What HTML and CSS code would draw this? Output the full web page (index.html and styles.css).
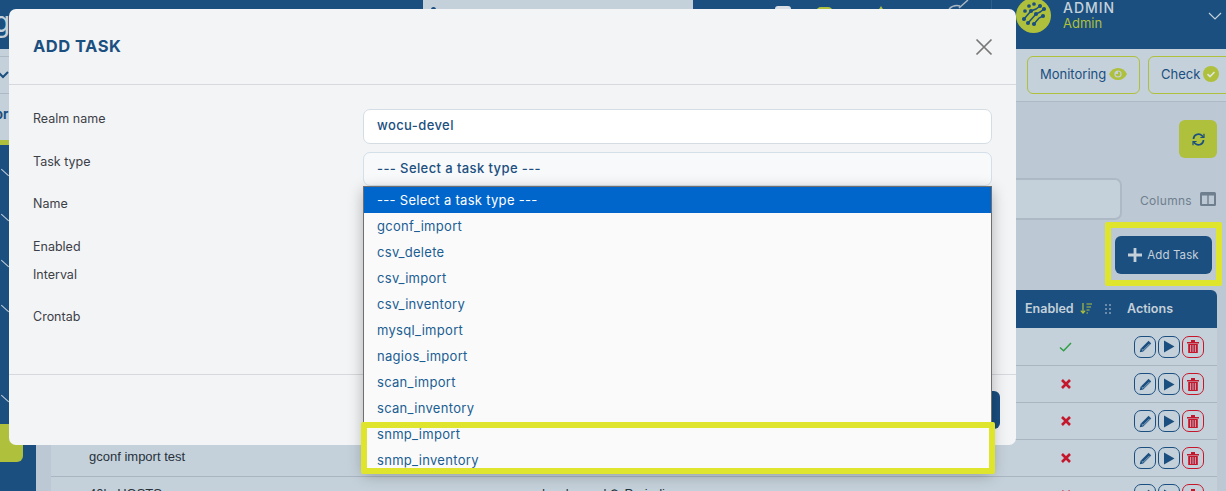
FILE: index.html
```html
<!DOCTYPE html>
<html lang="en">
<head>
  <meta charset="UTF-8" />
  <title>Add Task</title>
  <link rel="stylesheet" href="styles.css">
</head>
<body>

  <header class="topbar">
    <span class="brand">g</span>
    <div class="search"><span class="search-dot"></span></div>
    <div class="top-icons">
      <span class="ti ti-white"></span>
      <span class="ti ti-green"></span>
      <span class="ti ti-star"></span>
      <svg class="ti-check" width="26" height="10" viewBox="0 0 26 10"><path d="M3 9c3-3 7-4 11-3M13 8l9-8" fill="none" stroke="#aab8c4" stroke-width="1.5"/></svg>
    </div>
    <div class="user">
      <svg class="avatar" width="35" height="35" viewBox="0 0 35 35">
        <circle cx="17.5" cy="17.5" r="17.5" fill="#aec03c"/>
        <g stroke="#1b4f80" stroke-width="1.5" fill="#1b4f80">
          <path d="M8 21l7-8 5-2 4-3M12 25l8-9 4-2 4-3M18 26l5-6 4-2" fill="none"/>
          <circle cx="8" cy="21" r="1.3"/><circle cx="15" cy="13" r="1.3"/><circle cx="24" cy="8" r="1.3"/>
          <circle cx="12" cy="25" r="1.3"/><circle cx="20" cy="16" r="1.3"/><circle cx="28" cy="11" r="1.3"/>
          <circle cx="18" cy="26" r="1.3"/><circle cx="27" cy="18" r="1.3"/>
          <circle cx="9" cy="13" r="1.100"/><circle cx="13" cy="8" r="1.100"/><circle cx="18" cy="6" r="1.100"/>
        </g>
      </svg>
      <div class="user-text">
        <div class="user-name">ADMIN</div>
        <div class="user-role">Admin</div>
      </div>
      <svg class="user-chevron" width="14" height="8" viewBox="0 0 14 8"><path d="M1 1l6 6 6-6" fill="none" stroke="#c5d1da" stroke-width="1.2"/></svg>
    </div>
  </header>

  <div class="layout">
    <aside class="sidebar">
      <div class="side-head">
        <div class="side-row"><svg width="12" height="8" viewBox="0 0 12 8"><path d="M-2 1l5 5 5-5" fill="none" stroke="#1b4f80" stroke-width="2"/></svg></div>
        <div class="side-label">or</div>
      </div>
      <div class="side-items">
        <div class="side-item"><i></i></div>
        <div class="side-item"><i></i></div>
        <div class="side-item"><i></i></div>
        <div class="side-item"><i></i></div>
        <div class="side-item side-empty"></div>
        <div class="side-item"><i></i></div>
      </div>
      <div class="side-green"></div>
    </aside>

    <main class="content">
      <div class="subbar">
        <button class="pill">Monitoring
          <svg width="18" height="12" viewBox="0 0 18 12"><path d="M0 6c2-4 5-6 9-6s7 2 9 6c-2 4-5 6-9 6S2 10 0 6z" fill="#aec03c"/><circle cx="9" cy="6" r="3.6" fill="#c5d1da"/><path d="M9 3.6A2.4 2.4 0 1 1 6.6 6H9z" fill="#aec03c"/></svg>
        </button>
        <button class="pill pill-check">Check
          <svg width="16" height="16" viewBox="0 0 16 16"><circle cx="8" cy="8" r="8" fill="#aec03c"/><path d="M4.5 8.2l2.500 2.400 4.500-4.600" fill="none" stroke="#dfe6e0" stroke-width="1.6"/></svg>
        </button>
      </div>

      <div class="tools">
        <button class="refresh">
          <svg width="13" height="13" viewBox="0 0 13 13" fill="none" stroke="#1b4f80" stroke-width="1.7"><path d="M1.5 6A5 5 0 0 1 10 2.6L11.5 4M11.500 7A5 5 0 0 1 3 10.400L1.500 9"/><path d="M12 .8v3.700H8.400M1 12.200V8.500h3.600" stroke-width="1.200"/></svg>
        </button>
      </div>

      <div class="filter-row">
        <div class="filter"></div>
        <span class="columns">Columns</span>
        <svg width="16" height="14" viewBox="0 0 16 14"><rect width="16" height="14" rx="1.500" fill="#6f7f8e"/><rect x="2" y="3.500" width="5.300" height="8.500" fill="#bcc8d3"/><rect x="8.700" y="3.500" width="5.300" height="8.500" fill="#bcc8d3"/></svg>
      </div>

      <div class="add-row">
        <div class="add-frame">
          <button class="add-btn">
            <svg width="14" height="14" viewBox="0 0 14 14"><path d="M7 0v14M0 7h14" stroke="#c5d1da" stroke-width="2.800"/></svg>
            Add Task
          </button>
        </div>
      </div>

      <div class="table">
        <div class="t-head">
          <span></span>
          <span></span>
          <span class="t-enabled">Enabled
            <svg width="12" height="11" viewBox="0 0 12 11" fill="none" stroke="#aec03c" stroke-width="1.200"><path d="M3 0v10M.8 7.600L3 10l2.200-2.400M6.500 1H12M6.500 4h4.500M6.500 7h3M6.500 10H8"/></svg>
            <svg class="grip" width="6" height="10" viewBox="0 0 6 10" fill="#6d8cab"><rect width="2" height="2"/><rect x="4" width="2" height="2"/><rect y="4" width="2" height="2"/><rect x="4" y="4" width="2" height="2"/><rect y="8" width="2" height="2"/><rect x="4" y="8" width="2" height="2"/></svg>
          </span>
          <span>Actions</span>
        </div>

        <div class="t-row t-first">
          <span class="t-name"></span>
          <span></span>
          <span class="t-state"><svg width="13" height="10" viewBox="0 0 13 10"><path d="M1 5.500l3.600 3.200L12 1" fill="none" stroke="#2f9e44" stroke-width="1.500"/></svg></span>
          <span class="t-actions">
            <button class="act"><svg width="13" height="13" viewBox="0 0 13 13"><path d="M9.600.8l2.600 2.600-8 8L.8 12.200l.8-3.400z" fill="#1b4f80"/><path d="M2.600 9l1.400 1.400 6.600-6.600" fill="none" stroke="#c5d1da" stroke-width=".7"/></svg></button>
            <button class="act"><svg width="12" height="13" viewBox="0 0 12 13"><path d="M1 .5l10.500 6L1 12.500z" fill="#1b4f80"/></svg></button>
            <button class="act act-del"><svg width="12" height="13" viewBox="0 0 12 13"><path d="M0 2h12v1.400H0zM4 0h4v2H4zM1.200 4h9.600v9H1.200z" fill="#c4172c"/><path d="M3.600 5v7M6 5v7M8.400 5v7" stroke="#c5d1da" stroke-width=".8"/></svg></button>
          </span>
        </div>

        <div class="t-row">
          <span class="t-name"></span>
          <span></span>
          <span class="t-state"><svg class="no" width="10" height="10" viewBox="0 0 10 10"><path d="M1 1l8 8M9 1l-8 8" stroke="#c4172c" stroke-width="2.600"/></svg></span>
          <span class="t-actions">
            <button class="act"><svg width="13" height="13" viewBox="0 0 13 13"><path d="M9.600.8l2.600 2.600-8 8L.8 12.200l.8-3.400z" fill="#1b4f80"/><path d="M2.600 9l1.400 1.400 6.600-6.600" fill="none" stroke="#c5d1da" stroke-width=".7"/></svg></button>
            <button class="act"><svg width="12" height="13" viewBox="0 0 12 13"><path d="M1 .5l10.500 6L1 12.500z" fill="#1b4f80"/></svg></button>
            <button class="act act-del"><svg width="12" height="13" viewBox="0 0 12 13"><path d="M0 2h12v1.400H0zM4 0h4v2H4zM1.200 4h9.600v9H1.200z" fill="#c4172c"/><path d="M3.600 5v7M6 5v7M8.400 5v7" stroke="#c5d1da" stroke-width=".8"/></svg></button>
          </span>
        </div>

        <div class="t-row">
          <span class="t-name"></span>
          <span></span>
          <span class="t-state"><svg class="no" width="10" height="10" viewBox="0 0 10 10"><path d="M1 1l8 8M9 1l-8 8" stroke="#c4172c" stroke-width="2.600"/></svg></span>
          <span class="t-actions">
            <button class="act"><svg width="13" height="13" viewBox="0 0 13 13"><path d="M9.600.8l2.600 2.600-8 8L.8 12.200l.8-3.400z" fill="#1b4f80"/><path d="M2.600 9l1.400 1.400 6.600-6.600" fill="none" stroke="#c5d1da" stroke-width=".7"/></svg></button>
            <button class="act"><svg width="12" height="13" viewBox="0 0 12 13"><path d="M1 .5l10.500 6L1 12.500z" fill="#1b4f80"/></svg></button>
            <button class="act act-del"><svg width="12" height="13" viewBox="0 0 12 13"><path d="M0 2h12v1.400H0zM4 0h4v2H4zM1.200 4h9.600v9H1.200z" fill="#c4172c"/><path d="M3.600 5v7M6 5v7M8.400 5v7" stroke="#c5d1da" stroke-width=".8"/></svg></button>
          </span>
        </div>

        <div class="t-row">
          <span class="t-name">gconf import test</span>
          <span></span>
          <span class="t-state"><svg class="no" width="10" height="10" viewBox="0 0 10 10"><path d="M1 1l8 8M9 1l-8 8" stroke="#c4172c" stroke-width="2.600"/></svg></span>
          <span class="t-actions">
            <button class="act"><svg width="13" height="13" viewBox="0 0 13 13"><path d="M9.600.8l2.600 2.600-8 8L.8 12.200l.8-3.400z" fill="#1b4f80"/><path d="M2.600 9l1.400 1.400 6.600-6.600" fill="none" stroke="#c5d1da" stroke-width=".7"/></svg></button>
            <button class="act"><svg width="12" height="13" viewBox="0 0 12 13"><path d="M1 .5l10.500 6L1 12.500z" fill="#1b4f80"/></svg></button>
            <button class="act act-del"><svg width="12" height="13" viewBox="0 0 12 13"><path d="M0 2h12v1.400H0zM4 0h4v2H4zM1.200 4h9.600v9H1.200z" fill="#c4172c"/><path d="M3.600 5v7M6 5v7M8.400 5v7" stroke="#c5d1da" stroke-width=".8"/></svg></button>
          </span>
        </div>

        <div class="t-row">
          <span class="t-name">40k_HOSTS</span>
          <span class="t-type">wocu-devel mysql ⟳ Periodic</span>
          <span class="t-state"><svg class="no" width="10" height="10" viewBox="0 0 10 10"><path d="M1 1l8 8M9 1l-8 8" stroke="#c4172c" stroke-width="2.600"/></svg></span>
          <span class="t-actions">
            <button class="act"><svg width="13" height="13" viewBox="0 0 13 13"><path d="M9.600.8l2.600 2.600-8 8L.8 12.200l.8-3.400z" fill="#1b4f80"/><path d="M2.600 9l1.400 1.400 6.600-6.600" fill="none" stroke="#c5d1da" stroke-width=".7"/></svg></button>
            <button class="act"><svg width="12" height="13" viewBox="0 0 12 13"><path d="M1 .5l10.500 6L1 12.500z" fill="#1b4f80"/></svg></button>
            <button class="act act-del"><svg width="12" height="13" viewBox="0 0 12 13"><path d="M0 2h12v1.400H0zM4 0h4v2H4zM1.200 4h9.600v9H1.200z" fill="#c4172c"/><path d="M3.600 5v7M6 5v7M8.400 5v7" stroke="#c5d1da" stroke-width=".8"/></svg></button>
          </span>
        </div>
      </div>
    </main>
  </div>

  <div class="modal">
    <div class="modal-head">
      <h2>ADD TASK</h2>
      <svg width="18" height="18" viewBox="0 0 18 18"><path d="M1.500 1.500l15 15M16.500 1.500l-15 15" stroke="#777" stroke-width="1.700" fill="none"/></svg>
    </div>
    <div class="modal-body">
      <div class="labels">
        <label class="l-realm">Realm name</label>
        <label class="l-type">Task type</label>
        <label class="l-name">Name</label>
        <label class="l-enabled">Enabled</label>
        <label class="l-interval">Interval</label>
        <label class="l-cron">Crontab</label>
      </div>
      <div class="fields">
        <div class="input">wocu-devel</div>
        <div class="input select">--- Select a task type ---</div>
      </div>
    </div>
    <div class="modal-foot">
      <button class="save">Save</button>
    </div>
  </div>

  <ul class="dropdown">
    <li class="selected">--- Select a task type ---</li>
    <li>gconf_import</li>
    <li>csv_delete</li>
    <li>csv_import</li>
    <li>csv_inventory</li>
    <li>mysql_import</li>
    <li>nagios_import</li>
    <li>scan_import</li>
    <li>scan_inventory</li>
    <li>snmp_import</li>
    <li>snmp_inventory</li>
  </ul>
  <div class="mark"></div>

</body>
</html>
```

FILE: styles.css
```css
* {
  margin: 0;
  padding: 0;
  box-sizing: border-box;
}

body {
  position: relative;
  width: 1226px;
  height: 491px;
  overflow: hidden;
  font-family: "Inter", "Liberation Sans", sans-serif;
  font-size: 13px;
  background: #bcc8d3;
  color: #1b4f80;
}

button {
  font-family: inherit;
  cursor: pointer;
}

/* top bar */
.topbar {
  display: flex;
  align-items: flex-start;
  height: 49px;
  background: #1b4f80;
}

.brand {
  width: 423px;
  margin-left: -7px;
  padding-top: 7px;
  font-size: 28px;
  line-height: 30px;
  color: #c5d1da;
}

.search {
  width: 270px;
  height: 24px;
  margin-left: 7px;
  padding: 7px 8px;
  background: #c5d1da;
}

.search-dot {
  display: block;
  width: 5px;
  height: 5px;
  border-radius: 50%;
  background: #1b4f80;
}

.top-icons {
  display: flex;
  width: 299px;
  height: 30px;
  padding-left: 82px;
  border-right: 1px solid #2f6088;
  align-items: flex-start;
}

.ti {
  display: block;
  height: 16px;
  margin-top: 6px;
}

.ti-white {
  width: 16px;
  border-radius: 3px;
  background: #d9dfe5;
}

.ti-green {
  width: 17px;
  margin-left: 25px;
  margin-top: 7px;
  border-radius: 5px;
  background: #aec03c;
}

.ti-star {
  width: 0;
  height: 0;
  margin-left: 43px;
  border-left: 5px solid transparent;
  border-right: 5px solid transparent;
  border-bottom: 8px solid #aec03c;
}

.ti-check {
  margin-left: 60px;
}

.user {
  display: flex;
  flex: 1;
  align-items: flex-start;
  padding-left: 24px;
}

.avatar {
  margin-top: -2px;
  flex: none;
}

.user-text {
  margin-left: 12px;
}

.user-name {
  font-size: 14px;
  line-height: 16px;
  font-weight: 500;
  letter-spacing: 1px;
  color: #c5d1da;
}

.user-role {
  font-size: 13px;
  line-height: 14px;
  color: #aec03c;
}

.user-chevron {
  margin-left: auto;
  margin-right: 4px;
  margin-top: 12px;
}

/* page below the top bar */
.layout {
  display: flex;
  height: 442px;
}

.sidebar {
  width: 36px;
  flex: none;
  background: #1b4f80;
}

.side-head {
  height: 96px;
  padding-top: 7px;
  background: #c5d1da;
  border-bottom: 5px solid #aec03c;
}

.side-row {
  display: flex;
  align-items: center;
  height: 38px;
  border-top: 1px solid #adbac5;
  border-bottom: 1px solid #adbac5;
}

.side-label {
  margin-left: -5px;
  margin-top: 12px;
  font-weight: 700;
  line-height: 16px;
}

.side-items {
  padding-top: 23px;
}

.side-item {
  height: 45.300px;
}

.side-item i {
  display: block;
  width: 10px;
  height: 1px;
  background: #c5d1da;
  transform: translate(0, 4px) rotate(42deg);
}

.side-green {
  position: absolute;
  left: 0;
  top: 424px;
  width: 23px;
  height: 38px;
  border-bottom-right-radius: 6px;
  background: #aec03c;
}

.content {
  flex: 1;
  min-width: 0;
}

.subbar {
  display: flex;
  justify-content: flex-end;
  gap: 8px;
  height: 53px;
  margin-right: -11px;
  padding-top: 7px;
  background: #c5d1da;
  border-bottom: 1px solid #adbac5;
}

.pill {
  display: flex;
  align-items: center;
  justify-content: space-between;
  width: 113px;
  height: 38px;
  padding: 0 12px 2px;
  font-size: 13px;
  color: #1b4f80;
  background: transparent;
  border: 1px solid #aec03c;
  border-radius: 6px;
}

.pill-check {
  width: 89px;
  justify-content: flex-start;
  gap: 3px;
}

.tools {
  display: flex;
  justify-content: flex-end;
  padding: 18px 9px 0 0;
}

.refresh {
  display: flex;
  align-items: center;
  justify-content: center;
  width: 38px;
  height: 38px;
  background: #aec03c;
  border: none;
  border-radius: 6px;
}

.filter-row {
  display: flex;
  align-items: center;
  justify-content: flex-end;
  margin-top: 20px;
  padding-right: 10px;
}

.filter {
  width: 400px;
  height: 42px;
  background: #c5d1da;
  border: 2px solid #adbac5;
  border-radius: 7px;
}

.columns {
  margin: 2px 8px 0 18px;
  font-size: 12px;
  letter-spacing: 0.3px;
  color: #6f7f8e;
}

.add-row {
  display: flex;
  justify-content: flex-end;
  margin-top: 2px;
  padding-right: 4px;
}

.add-frame {
  width: 117px;
  height: 64px;
  padding: 8px 4px;
  background: #bcc8d3;
  border: 6px solid #dfe52c;
  border-radius: 2px;
}

.add-btn {
  display: flex;
  align-items: center;
  justify-content: center;
  gap: 5px;
  width: 97px;
  height: 38px;
  font-size: 11.500px;
  letter-spacing: 0.1px;
  color: #c5d1da;
  background: #1b4f80;
  border: none;
  border-radius: 6px;
}

.table {
  margin: 4px 9px 0 15px;
}

.t-head,
.t-row {
  display: grid;
  grid-template-columns: 464px 1fr 102px 90px;
  align-items: center;
}

.t-head {
  height: 38px;
  padding-bottom: 1px;
  font-size: 12.500px;
  font-weight: 600;
  color: #c5d1da;
  background: #1b4f80;
  border-top-right-radius: 6px;
}

.t-enabled {
  display: flex;
  align-items: center;
  gap: 6px;
}

.grip {
  margin-left: 7px;
}

.t-row {
  height: 37px;
  font-family: "Liberation Sans", sans-serif;
  font-size: 13px;
  color: #27323c;
  background: #c5d1da;
  border-bottom: 1px solid #a9b6c1;
}

.t-first {
  height: 38px;
}

.t-name {
  padding-left: 38px;
  padding-bottom: 3px;
}

.t-type {
  margin-left: -12px;
  padding-bottom: 3px;
}

.t-state {
  display: flex;
  padding-left: 34px;
}

.no {
  margin-left: 2px;
}

.t-actions {
  display: flex;
  gap: 2px;
  padding-left: 7px;
}

.act {
  display: flex;
  align-items: center;
  justify-content: center;
  width: 22px;
  height: 22px;
  background: transparent;
  border: 1px solid #1b4f80;
  border-radius: 7px;
}

.act-del {
  border-color: #c4172c;
}

/* modal */
.modal {
  position: absolute;
  left: 9px;
  top: 9px;
  display: flex;
  flex-direction: column;
  width: 1007px;
  height: 436px;
  background: #f3f4f6;
  border-radius: 7px;
}

.modal-head {
  display: flex;
  align-items: center;
  justify-content: space-between;
  height: 76px;
  padding: 0 23px 0 24px;
  border-bottom: 1px solid #d5d8dc;
}

.modal-head h2 {
  margin-bottom: 2px;
  font-size: 16.500px;
  font-weight: 700;
  letter-spacing: 0.5px;
  color: #1b4f80;
}

.modal-body {
  position: relative;
  display: flex;
  flex: 1;
  padding: 24px 24px 0;
}

.labels {
  width: 330px;
  padding-top: 2px;
  color: #3b4046;
  font-size: 12.500px;
}

.labels label {
  display: block;
  line-height: 16px;
}

.l-type { margin-top: 27px; }
.l-name { margin-top: 26px; }
.l-enabled { margin-top: 27px; }
.l-interval { margin-top: 12px; }
.l-cron { margin-top: 26px; }

.fields {
  flex: 1;
  display: flex;
  flex-direction: column;
  gap: 8px;
}

.input {
  height: 35px;
  padding: 0 13px;
  line-height: 31px;
  font-weight: 500;
  font-size: 13px;
  letter-spacing: 0.4px;
  color: #1b4f80;
  background: #fff;
  border: 1px solid #d5dde4;
  border-radius: 7px;
}

.select {
  height: 34px;
  background: #f8f9fa;
  border-color: #d3e0ea;
}

.modal-foot {
  display: flex;
  justify-content: flex-end;
  height: 71px;
  padding: 16px;
  border-top: 1px solid #d5d8dc;
}

.save {
  width: 90px;
  height: 38px;
  color: #fff;
  background: #1b4f80;
  border: none;
  border-radius: 6px;
}

/* open select list */
.dropdown {
  position: absolute;
  left: 363px;
  top: 186px;
  width: 629px;
  height: 285px;
  list-style: none;
  font-size: 13px;
  letter-spacing: 0.3px;
  color: #1b5e93;
  background: #fafafa;
  border: 1px solid #6f6f6f;
  box-shadow: 0 4px 14px rgba(0, 0, 0, 0.28);
}

.dropdown li {
  height: 26px;
  padding-left: 13px;
  line-height: 27px;
}

.dropdown .selected {
  color: #fff;
  background: #0066cc;
}

.mark {
  position: absolute;
  left: 361px;
  top: 422px;
  width: 634px;
  height: 52px;
  border: 6px solid #dfe52c;
  border-radius: 2px;
}
```
